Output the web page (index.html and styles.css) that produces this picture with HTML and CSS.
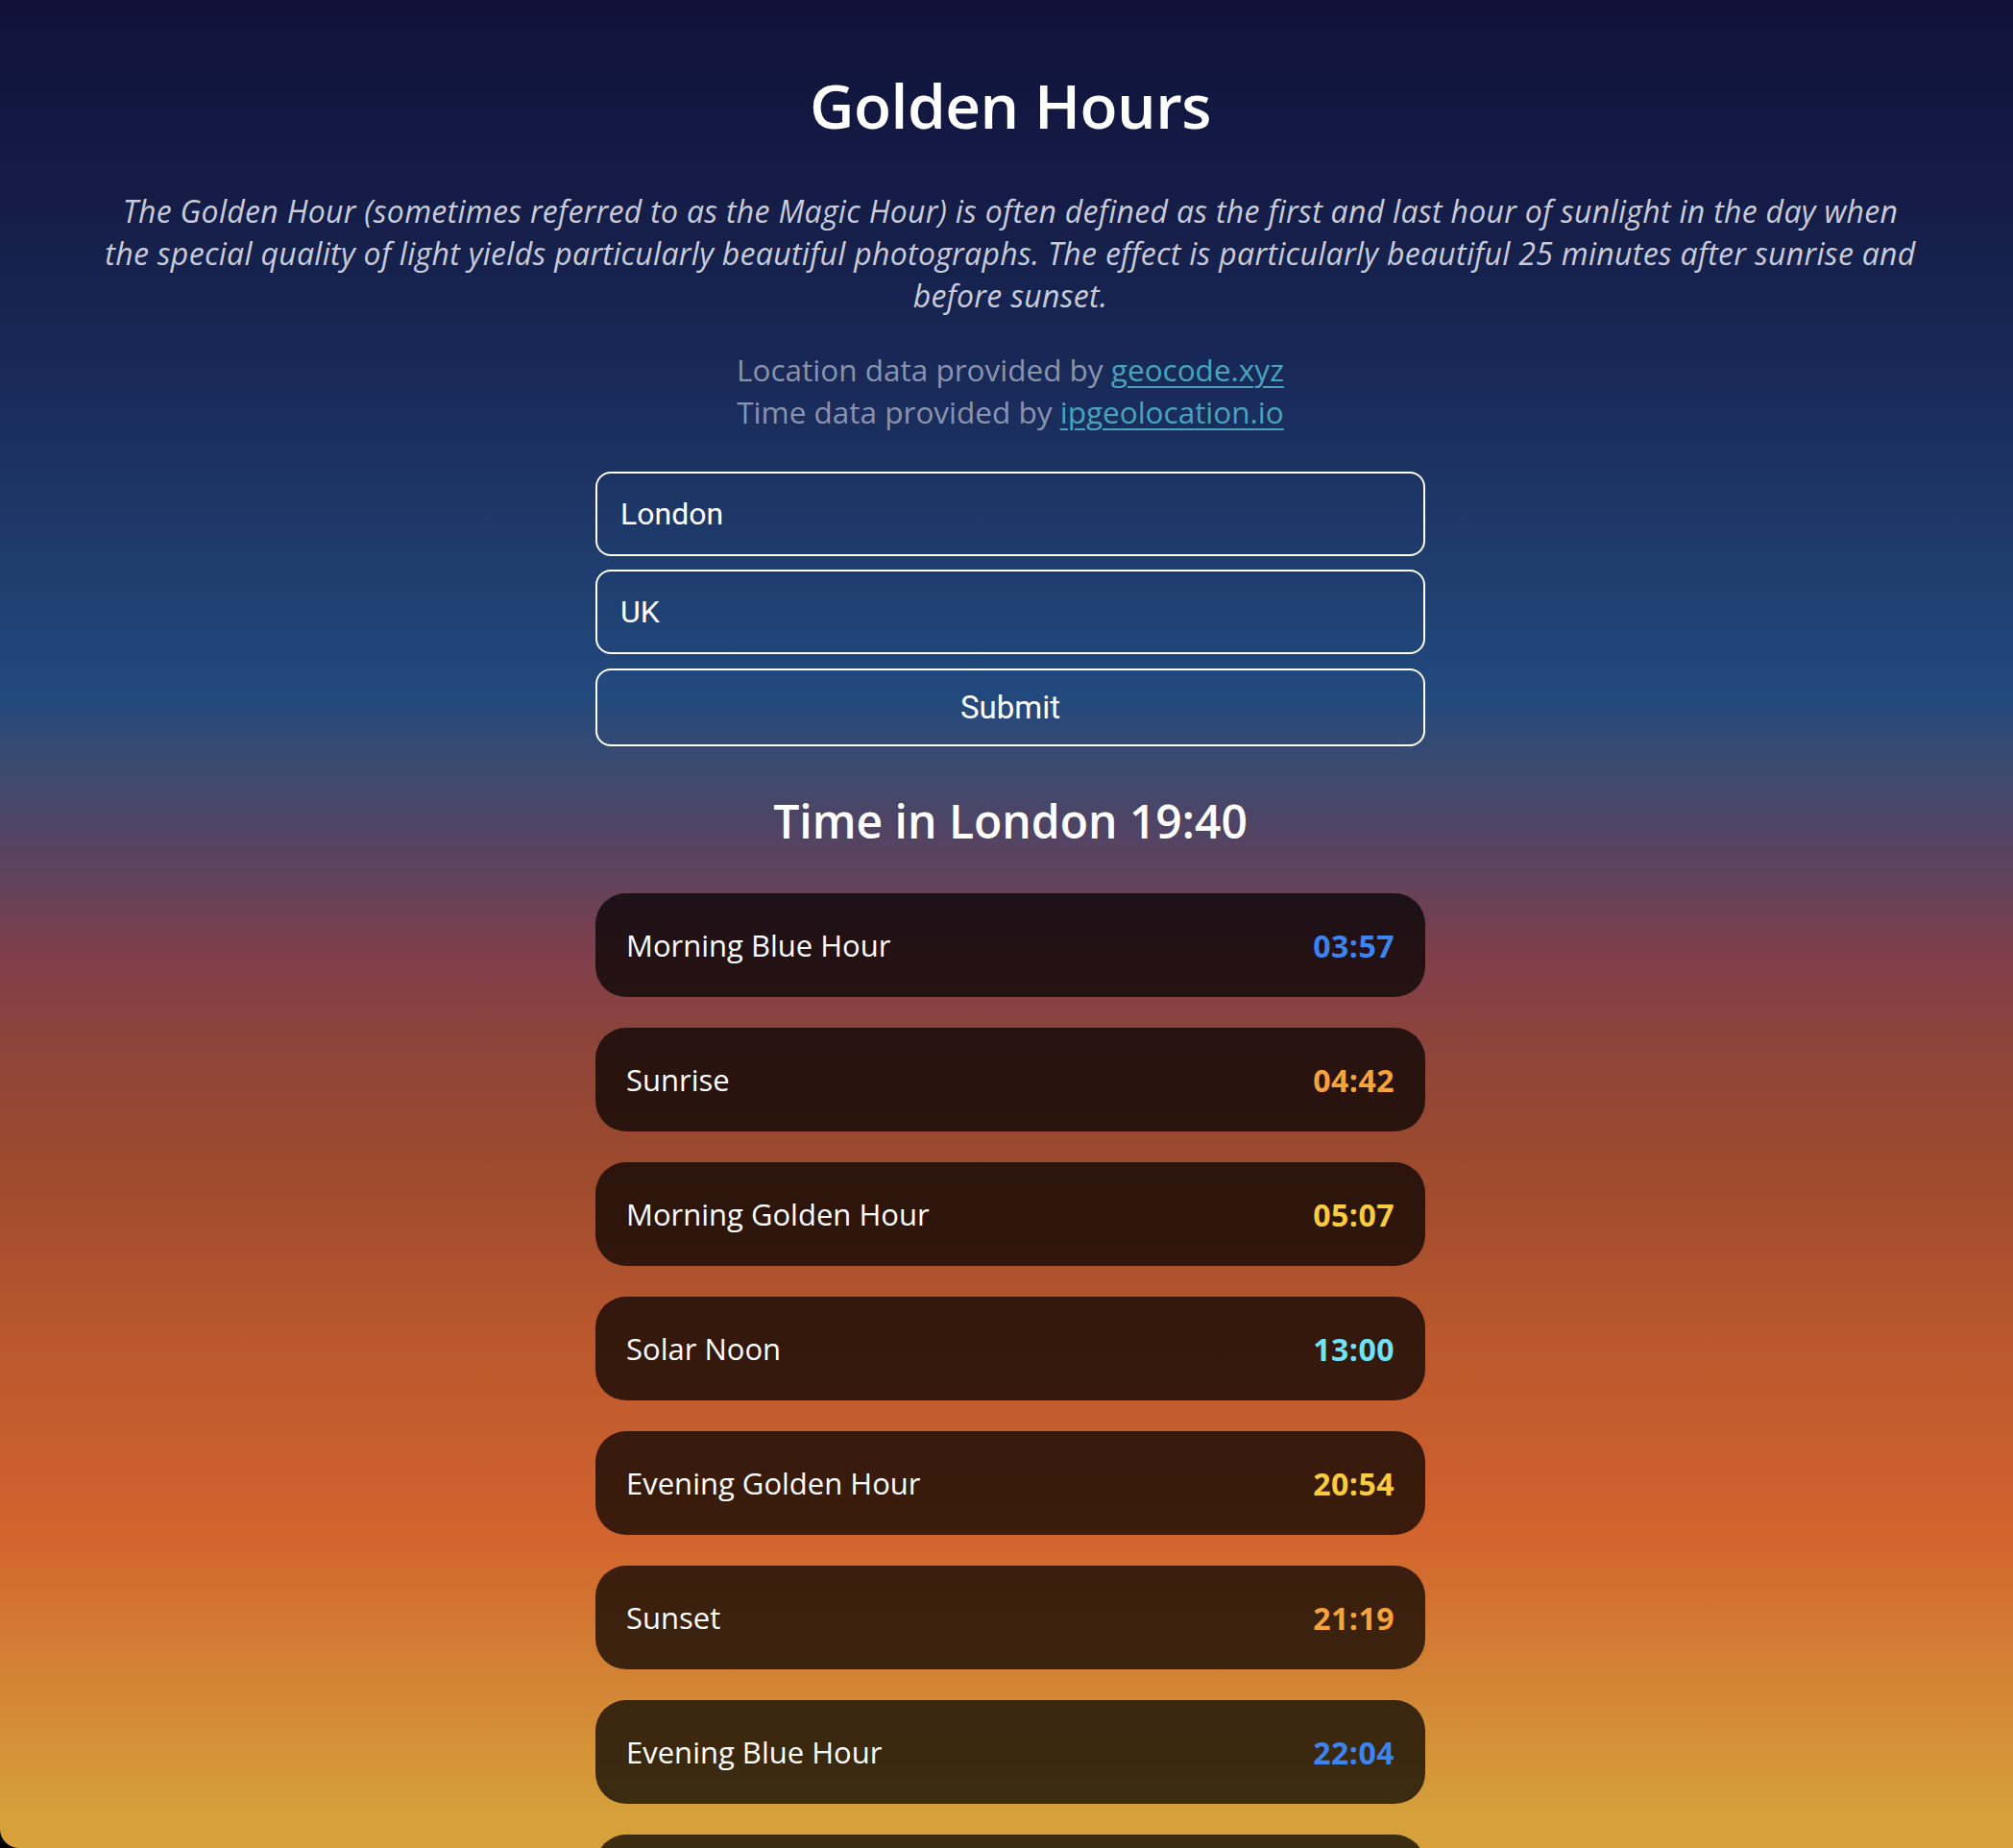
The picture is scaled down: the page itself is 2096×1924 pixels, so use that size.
FILE: index.html
```html
<!DOCTYPE html>
<html lang="en">
<head>
<meta charset="utf-8">
<title>Golden Hours</title>
<link rel="stylesheet" href="styles.css">
</head>
<body>
<main class="page">
  <h1 class="title">Golden Hours</h1>
  <p class="intro">The Golden Hour (sometimes referred to as the Magic Hour) is often defined as the first and last hour of sunlight in the day when the special quality of light yields particularly beautiful photographs. The effect is particularly beautiful 25 minutes after sunrise and before sunset.</p>
  <p class="credits">Location data provided by <a href="#">geocode.xyz</a><br>Time data provided by <a href="#">ipgeolocation.io</a></p>
  <form class="form">
    <input class="field" type="text" value="London">
    <input class="field" type="text" value="UK">
    <button class="submit" type="button">Submit</button>
  </form>
  <h2 class="now">Time in London 19:40</h2>
  <ul class="times">
    <li class="row"><span class="label">Morning Blue Hour</span><span class="time blue">03:57</span></li>
    <li class="row"><span class="label">Sunrise</span><span class="time orange">04:42</span></li>
    <li class="row"><span class="label">Morning Golden Hour</span><span class="time gold">05:07</span></li>
    <li class="row"><span class="label">Solar Noon</span><span class="time cyan">13:00</span></li>
    <li class="row"><span class="label">Evening Golden Hour</span><span class="time gold">20:54</span></li>
    <li class="row"><span class="label">Sunset</span><span class="time orange">21:19</span></li>
    <li class="row"><span class="label">Evening Blue Hour</span><span class="time blue">22:04</span></li>
    <li class="row"><span class="label">Day Length</span><span class="time cyan">16:37</span></li>
  </ul>
</main>
<div class="corner"></div>
</body>
</html>
```
FILE: styles.css
```css
html, body {
  margin: 0;
  padding: 0;
}
body {
  min-height: 100vh;
  font-family: "Open Sans", "Noto Sans", sans-serif;
  color: #fff;
  background: linear-gradient(to bottom,
    #10123a 0px,
    #141c46 200px,
    #192a59 400px,
    #1e3a6a 560px,
    #22497e 724px,
    #2f4a76 760px,
    #3c4a70 800px,
    #4f4465 860px,
    #63425a 920px,
    #7f3e4a 994px,
    #8f4538 1100px,
    #9f4b2d 1227px,
    #bb582d 1400px,
    #d2632d 1595px,
    #d27a33 1700px,
    #d6a03a 1890px,
    #d8a83e 2400px);
}
.page {
  display: flex;
  flex-direction: column;
  align-items: center;
  padding: 67px 0 40px 8px;
}
.title {
  margin: 0;
  font-size: 64px;
  line-height: 86px;
  font-weight: 600;
  letter-spacing: -0.5px;
}
.intro {
  margin: 45px 0 0;
  max-width: 1900px;
  text-align: center;
  font-style: italic;
  font-size: 32px;
  line-height: 44px;
  letter-spacing: 0.3px;
  color: #c9ccd8;
}
.credits {
  margin: 33px 0 0;
  text-align: center;
  font-size: 31.5px;
  line-height: 44px;
  color: #8a93ad;
}
.credits a {
  color: #49a3bd;
  text-decoration: underline;
  text-underline-offset: 5px;
  text-decoration-thickness: 2px;
}
.form {
  margin-top: 40px;
  width: 864px;
  display: flex;
  flex-direction: column;
  gap: 14px;
}
.field, .submit {
  box-sizing: border-box;
  width: 100%;
  border: 2px solid #fff;
  border-radius: 16px;
  background: transparent;
  color: #fff;
  font-family: Roboto, Inter, sans-serif;
  font-size: 32px;
}
.field {
  height: 88px;
  padding: 0 24px;
  outline: none;
}
.submit {
  height: 81px;
  margin-top: 1px;
  text-align: center;
  font-size: 33px;
}
.now {
  margin: 49px 0 0;
  font-size: 48px;
  line-height: 58px;
  font-weight: 600;
}
.times {
  list-style: none;
  margin: 46px 0 0;
  padding: 0;
  width: 864px;
  display: flex;
  flex-direction: column;
  gap: 32px;
}
.row {
  height: 108px;
  box-sizing: border-box;
  padding: 0 32px;
  border-radius: 32px;
  background: rgba(0, 0, 0, 0.72);
  display: flex;
  align-items: center;
  justify-content: space-between;
  font-size: 31px;
}
.label {
  color: #fff;
}
.time {
  font-weight: 700;
  font-size: 32px;
  letter-spacing: 0.5px;
}
.blue { color: #3d84f0; }
.orange { color: #f5a33a; }
.gold { color: #f8cc3e; }
.cyan { color: #6fe2f6; }
.corner {
  position: fixed;
  left: 0;
  bottom: 0;
  width: 20px;
  height: 20px;
  background: radial-gradient(circle at 20px 0, transparent 19.5px, #000 20.5px);
}
```
